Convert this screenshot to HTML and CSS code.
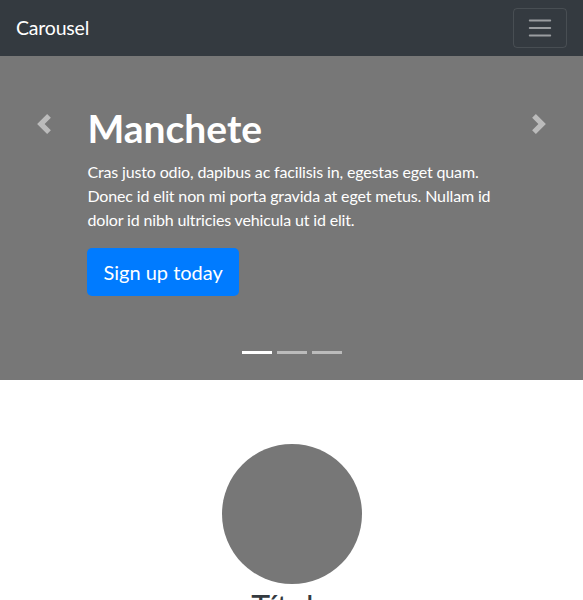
FILE: index.html
```html
<!DOCTYPE html>
<html lang="pt">
<head>
<meta charset="utf-8">
<title>Carousel</title>
<link rel="stylesheet" href="styles.css">
</head>
<body>
<header class="navbar">
  <a class="brand" href="#">Carousel</a>
  <button class="toggler" type="button" aria-label="Menu">
    <svg width="30" height="30" viewBox="0 0 30 30"><path d="M4 7h22M4 15h22M4 23h22" stroke="rgba(255,255,255,0.5)" stroke-width="2" stroke-linecap="round" stroke-miterlimit="10"/></svg>
  </button>
</header>
<main>
  <section class="carousel">
    <div class="caption">
      <h1 class="title">Manchete</h1>
      <p class="text">Cras justo odio, dapibus ac facilisis in, egestas eget quam. Donec id elit non mi porta gravida at eget metus. Nullam id dolor id nibh ultricies vehicula ut id elit.</p>
      <p class="action"><a class="btn" href="#">Sign up today</a></p>
    </div>
    <ol class="indicators">
      <li class="active"></li>
      <li></li>
      <li></li>
    </ol>
    <a class="control prev" href="#" aria-label="Anterior">
      <svg width="20" height="20" viewBox="0 0 8 8"><path fill="#fff" d="M5.25 0l-4 4 4 4 1.5-1.5L4.25 4l2.5-2.5L5.25 0z"/></svg>
    </a>
    <a class="control next" href="#" aria-label="Próximo">
      <svg width="20" height="20" viewBox="0 0 8 8"><path fill="#fff" d="M2.75 0l-1.5 1.5L3.75 4l-2.5 2.5L2.75 8l4-4-4-4z"/></svg>
    </a>
  </section>
  <section class="marketing">
    <div class="feature">
      <div class="circle"></div>
      <h2 class="feature-title">Título</h2>
    </div>
  </section>
</main>
</body>
</html>
```
FILE: styles.css
```css
* { box-sizing: border-box; }
html, body { margin: 0; }
body {
  font-family: "Lato", "Open Sans", "Noto Sans", sans-serif;
  font-size: 16px;
  line-height: 1.5;
  color: #212529;
  background: #fff;
  overflow: hidden;
}
.navbar {
  height: 56px;
  background: #343a40;
  display: flex;
  align-items: center;
  justify-content: space-between;
  padding: 8px 16px;
}
.brand {
  color: #fff;
  text-decoration: none;
  font-size: 19.5px;
  line-height: 30px;
  letter-spacing: -0.2px;
}
.toggler {
  width: 54px;
  height: 40px;
  padding: 4px 12px;
  background: transparent;
  border: 1px solid rgba(255,255,255,0.1);
  border-radius: 4px;
  display: flex;
  align-items: center;
  justify-content: center;
}
.toggler svg { display: block; }
.carousel {
  position: relative;
  height: 324px;
  background: #777;
  display: flex;
  flex-direction: column;
  justify-content: flex-end;
  padding: 0 15% 48px;
  color: #fff;
}
.caption { padding: 20px 0; }
.title {
  margin: 0 0 8px;
  font-size: 39px;
  line-height: 48px;
  font-weight: 700;
  letter-spacing: 0;
}
.text { margin: 0 0 16px; letter-spacing: -0.15px; }
.action { margin: 0 0 16px; line-height: 48px; height: 48px; }
.btn {
  display: inline-block;
  background: #007bff;
  color: #fff;
  text-decoration: none;
  font-size: 20px;
  line-height: 30px;
  padding: 9px 16px;
  border-radius: 5px;
  vertical-align: top;
}
.indicators {
  position: absolute;
  left: 0;
  right: 0;
  bottom: 26px;
  margin: 0;
  padding: 0;
  list-style: none;
  display: flex;
  justify-content: center;
  gap: 5px;
}
.indicators li {
  width: 30px;
  height: 3px;
  background: #fff;
  opacity: 0.5;
}
.indicators li.active { opacity: 1; }
.control {
  position: absolute;
  top: 0;
  width: 15%;
  height: 136px;
  display: flex;
  align-items: center;
  justify-content: center;
  opacity: 0.5;
}
.control svg { display: block; }
.prev { left: 0; }
.next { right: 0; }
.marketing {
  padding-top: 64px;
  display: flex;
  justify-content: center;
}
.feature { text-align: center; }
.circle {
  width: 140px;
  height: 140px;
  border-radius: 50%;
  background: #777;
  margin: 0 auto;
}
.feature-title {
  margin: 0;
  padding-top: 4px;
  font-size: 32px;
  line-height: 38px;
  font-weight: 400;
  color: #343a40;
}
```
